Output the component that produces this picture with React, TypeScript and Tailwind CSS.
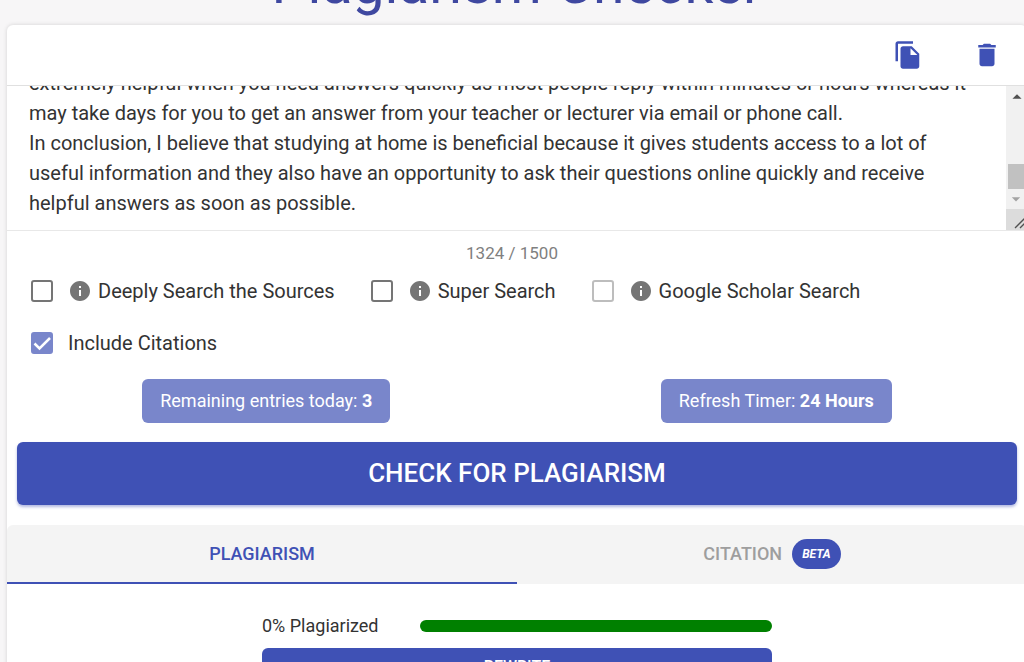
import React, { useLayoutEffect, useRef, useState } from "react";
import { MdArrowDropDown, MdArrowDropUp, MdDelete, MdFileCopy, MdInfo } from "react-icons/md";

const MAX_LENGTH = 1500;

const ESSAY = `extremely helpful when you need answers quickly as most people reply within minutes or hours whereas it may take days for you to get an answer from your teacher or lecturer via email or phone call.
In conclusion, I believe that studying at home is beneficial because it gives students access to a lot of useful information and they also have an opportunity to ask their questions online quickly and receive helpful answers as soon as possible.`;

interface OptionProps {
  label: string;
  info?: boolean;
  disabled?: boolean;
  defaultChecked?: boolean;
}

function Option({ label, info, disabled, defaultChecked }: OptionProps) {
  return (
    <label className="flex h-[52px] items-center text-xl">
      <span className="mr-[15px] grid size-[22px]">
        <input
          type="checkbox"
          disabled={disabled}
          defaultChecked={defaultChecked}
          className="peer col-start-1 row-start-1 size-[22px] appearance-none rounded-[3px] border-2 border-[#757575] bg-white checked:border-[#7986cb] checked:bg-[#7986cb] disabled:border-[#bdbdbd]"
        />
        <svg
          viewBox="0 0 22 22"
          className="pointer-events-none invisible col-start-1 row-start-1 size-[22px] fill-none stroke-white stroke-[2.5] peer-checked:visible"
        >
          <path d="M3.5 11.5 8.5 16.5 19 6" />
        </svg>
      </span>
      {info && <MdInfo className="mr-1.5 size-6 text-[#757575]" />}
      {label}
    </label>
  );
}

function Chip({ label, value }: { label: string; value: string }) {
  return (
    <div className="rounded-md bg-[#7986cb] px-[18px] py-2.5 text-lg leading-6 text-white">
      {label} <strong>{value}</strong>
    </div>
  );
}

function ScrollTrack() {
  return (
    <div className="flex w-[21px] flex-col bg-[#f1f1f1]">
      <MdArrowDropUp className="size-[22px] text-[#505050]" />
      <div className="flex flex-1 flex-col justify-end pl-0.5">
        <div className="h-[25px] bg-[#c1c1c1]" />
      </div>
      <MdArrowDropDown className="size-5 text-[#a3a3a3]" />
      <svg viewBox="0 0 21 21" className="size-[21px] bg-[#dcdcdc] stroke-[#505050] stroke-[1.3]">
        <path d="M9 19 20 8M14 19 20 13" />
      </svg>
    </div>
  );
}

export default function App() {
  const [text, setText] = useState(ESSAY);
  const [tab, setTab] = useState("plagiarism");
  const areaRef = useRef<HTMLTextAreaElement>(null);

  useLayoutEffect(() => {
    const area = areaRef.current;
    if (area) area.scrollTop = area.scrollHeight;
  }, []);

  const tabClass = "flex h-[59px] flex-1 items-center justify-center border-b-2 text-lg font-medium";

  return (
    <div className="min-h-screen overflow-hidden bg-[#f7f6f7] font-[Roboto,sans-serif] text-[#333333]">
      <header className="flex h-[25px] items-end justify-center overflow-hidden pb-[9px] pl-2.5">
        <h1 className="text-[57px] leading-[64px] font-normal text-[#3f48a0]">Plagiarism Checker</h1>
      </header>

      <main className="-mr-[3px] ml-[7px] rounded-md bg-white pb-10 shadow-[0_0_4px_rgba(0,0,0,0.15)]">
        <div className="flex h-[61px] items-center justify-end gap-[49px] border-b border-[#e0e0e0] pr-[25px] text-[#3f51b5]">
          <button type="button" aria-label="Copy text">
            <MdFileCopy className="size-[30px]" />
          </button>
          <button type="button" aria-label="Delete text" onClick={() => setText("")}>
            <MdDelete className="size-[30px]" />
          </button>
        </div>

        <div className="flex h-[145px] border-b border-[#e8e8e8]">
          <textarea
            ref={areaRef}
            aria-label="Text to check"
            value={text}
            maxLength={MAX_LENGTH}
            onChange={(e) => setText(e.target.value)}
            className="flex-1 resize-none overflow-hidden px-[22px] pb-3 text-xl leading-[30px] outline-none"
          />
          <ScrollTrack />
        </div>

        <p className="pt-2.5 pr-2.5 text-center text-[17px] leading-6 text-[#808080]">1324 / {MAX_LENGTH}</p>

        <div className="flex flex-wrap gap-x-9 pl-6">
          <Option label="Deeply Search the Sources" info />
          <Option label="Super Search" info />
          <Option label="Google Scholar Search" info disabled />
          <Option label="Include Citations" defaultChecked />
        </div>

        <div className="flex justify-around pt-2.5">
          <Chip label="Remaining entries today:" value="3" />
          <Chip label="Refresh Timer:" value="24 Hours" />
        </div>

        <div className="px-2.5 pt-[19px] pb-5">
          <button
            type="button"
            className="h-[63px] w-full rounded-md bg-[#3f51b5] text-[26px] font-medium text-white shadow-[0_2px_3px_rgba(63,81,181,0.4)]"
          >
            CHECK FOR PLAGIARISM
          </button>
        </div>

        <div role="tablist" className="flex rounded-t-md bg-[#f4f4f4]">
          <button
            type="button"
            role="tab"
            aria-selected={tab === "plagiarism"}
            onClick={() => setTab("plagiarism")}
            className={`${tabClass} ${tab === "plagiarism" ? "border-[#3f51b5] text-[#3f51b5]" : "border-transparent text-[#9e9e9e]"}`}
          >
            PLAGIARISM
          </button>
          <button
            type="button"
            role="tab"
            aria-selected={tab === "citation"}
            onClick={() => setTab("citation")}
            className={`${tabClass} ${tab === "citation" ? "border-[#3f51b5] text-[#3f51b5]" : "border-transparent text-[#9e9e9e]"}`}
          >
            CITATION
            <span className="ml-2.5 rounded-full bg-[#3f51b5] px-2.5 text-xs leading-[30px] font-bold text-white italic">
              BETA
            </span>
          </button>
        </div>

        <section className="mx-auto w-1/2 pt-[30px]">
          <div className="flex items-center">
            <span className="w-[158px] text-lg leading-6">0% Plagiarized</span>
            <div className="h-3 flex-1 rounded-full bg-[#008000]" />
          </div>
          <button
            type="button"
            className="mt-2.5 h-[38px] w-full rounded-md bg-[#3f51b5] text-base font-medium text-white"
          >
            REWRITE
          </button>
        </section>
      </main>
    </div>
  );
}
